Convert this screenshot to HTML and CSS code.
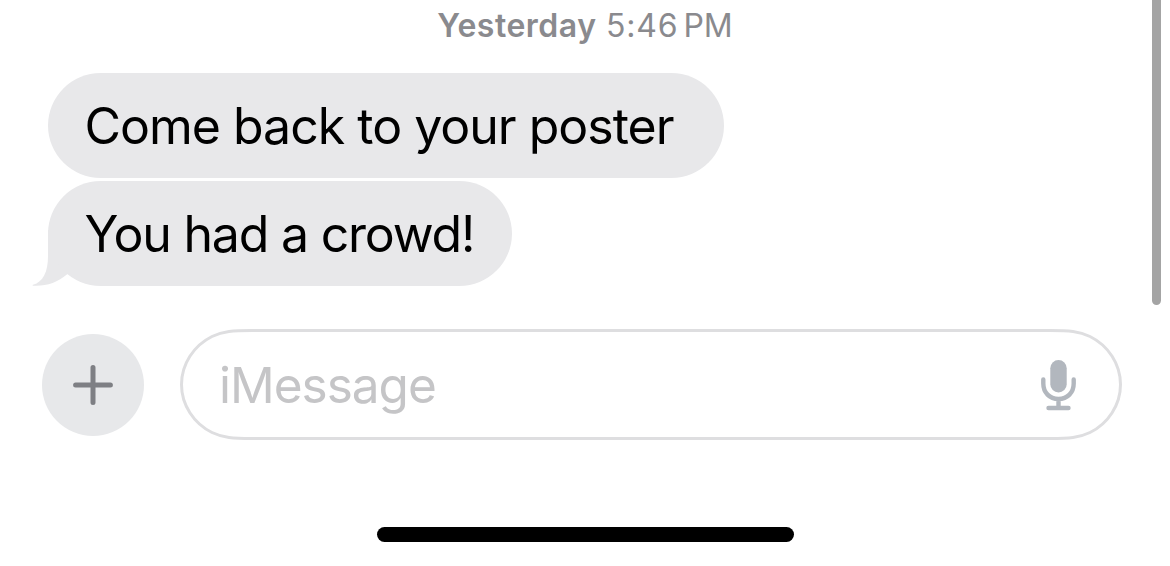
FILE: index.html
```html
<!DOCTYPE html>
<html lang="en">
<head>
<meta charset="utf-8">
<title>Messages</title>
<link rel="stylesheet" href="styles.css">
</head>
<body>
<main class="screen">
  <div class="timestamp"><span class="day">Yesterday</span><span class="time">5:46</span><span class="period">PM</span></div>
  <section class="thread">
    <div class="bubble"><span>Come back to your poster</span></div>
    <div class="bubble last"><span>You had a crowd!</span>
      <svg class="tail" width="40" height="56" viewBox="0 0 40 56"><path d="M16 0V26C16 42 11 52 1 54.8C.4 55 .4 55.6 1 55.7C14 56.4 25 53 35.500 44L40 30V0Z"/></svg>
    </div>
  </section>
  <form class="composer">
    <button class="add" type="button" aria-label="Add">
      <svg width="40" height="40" viewBox="0 0 40 40"><path d="M20 2.600V37.400M2.600 20H37.400"/></svg>
    </button>
    <div class="field">
      <svg class="outline" width="942" height="111" viewBox="0 0 942 111"><path d="M72 1.500H870C889 1.500 899 2.200 910 7.500C928.300 16.600 940.500 35.100 940.500 55.500S928.300 94.400 910 103.500C899 108.800 889 109.500 870 109.500H72C53 109.500 43 108.800 32 103.500C13.700 94.400 1.500 75.900 1.500 55.500S13.700 16.600 32 7.500C43 2.200 53 1.500 72 1.500Z"/></svg>
      <span class="placeholder">iMessage</span>
      <svg class="mic" width="36" height="52" viewBox="0 0 36 52"><rect x="9.300" y="1" width="16.400" height="32.400" rx="8.200"/><path d="M2.300 20.500V24.500C2.300 33.500 8.500 40 17.500 40S32.700 33.500 32.700 24.500V20.500M17.500 40V49M7.500 49H27.500"/></svg>
    </div>
  </form>
  <div class="home-indicator"></div>
  <div class="scrollbar"></div>
</main>
</body>
</html>
```

FILE: styles.css
```css
body {
  margin: 0;
  background: #fff;
  font-family: Inter, "Liberation Sans", sans-serif;
}
.screen {
  position: relative;
  display: flex;
  flex-direction: column;
  width: 1170px;
  height: 566px;
  overflow: hidden;
}
.timestamp {
  display: flex;
  justify-content: center;
  height: 73px;
  line-height: 52px;
  font-size: 32px;
  color: #8a8a8e;
  white-space: nowrap;
}
.day {
  font-weight: 600;
  letter-spacing: 0.500px;
  margin-right: 9.500px;
}
.time {
  letter-spacing: 0.800px;
  margin-right: 5px;
}
.thread {
  display: flex;
  flex-direction: column;
  align-items: flex-start;
  gap: 3px;
  padding-left: 48px;
}
.bubble {
  position: relative;
  box-sizing: border-box;
  width: 676px;
  height: 105px;
  padding-left: 36.500px;
  border-radius: 52.500px;
  background: #e8e8ea;
  color: #000;
  font-size: 50px;
  line-height: 107px;
  letter-spacing: -1px;
  white-space: nowrap;
}
.last {
  width: 464px;
  letter-spacing: -1.200px;
}
.tail {
  position: absolute;
  left: -16px;
  bottom: 0;
  fill: #e8e8ea;
  z-index: -1;
}
.composer {
  display: flex;
  align-items: center;
  gap: 36px;
  margin-top: 43px;
  padding-left: 42px;
}
.add {
  display: flex;
  align-items: center;
  justify-content: center;
  width: 102px;
  height: 102px;
  padding: 0;
  border: 0;
  border-radius: 50%;
  background: #e7e8ea;
}
.add path {
  fill: none;
  stroke: #7e7f84;
  stroke-width: 5;
  stroke-linecap: round;
}
.field {
  position: relative;
  display: flex;
  align-items: center;
  justify-content: space-between;
  box-sizing: border-box;
  width: 942px;
  height: 111px;
  padding: 0 45px 0 39px;
}
.outline {
  position: absolute;
  left: 0;
  top: 0;
  fill: none;
  stroke: #dedee0;
  stroke-width: 3;
}
.placeholder {
  font-size: 49.500px;
  line-height: 111px;
  padding-top: 2px;
  letter-spacing: -1px;
  color: #c5c5c7;
}
.mic {
  fill: #b2b7be;
}
.mic path {
  fill: none;
  stroke: #b2b7be;
  stroke-width: 4.400;
  stroke-linecap: round;
}
.home-indicator {
  width: 417px;
  height: 15px;
  margin: 87px 0 0 377px;
  border-radius: 7.500px;
  background: #000;
}
.scrollbar {
  position: absolute;
  top: -10px;
  left: 1152px;
  width: 9px;
  height: 315px;
  border-radius: 4.500px;
  background: #a4a4a4;
}
```
